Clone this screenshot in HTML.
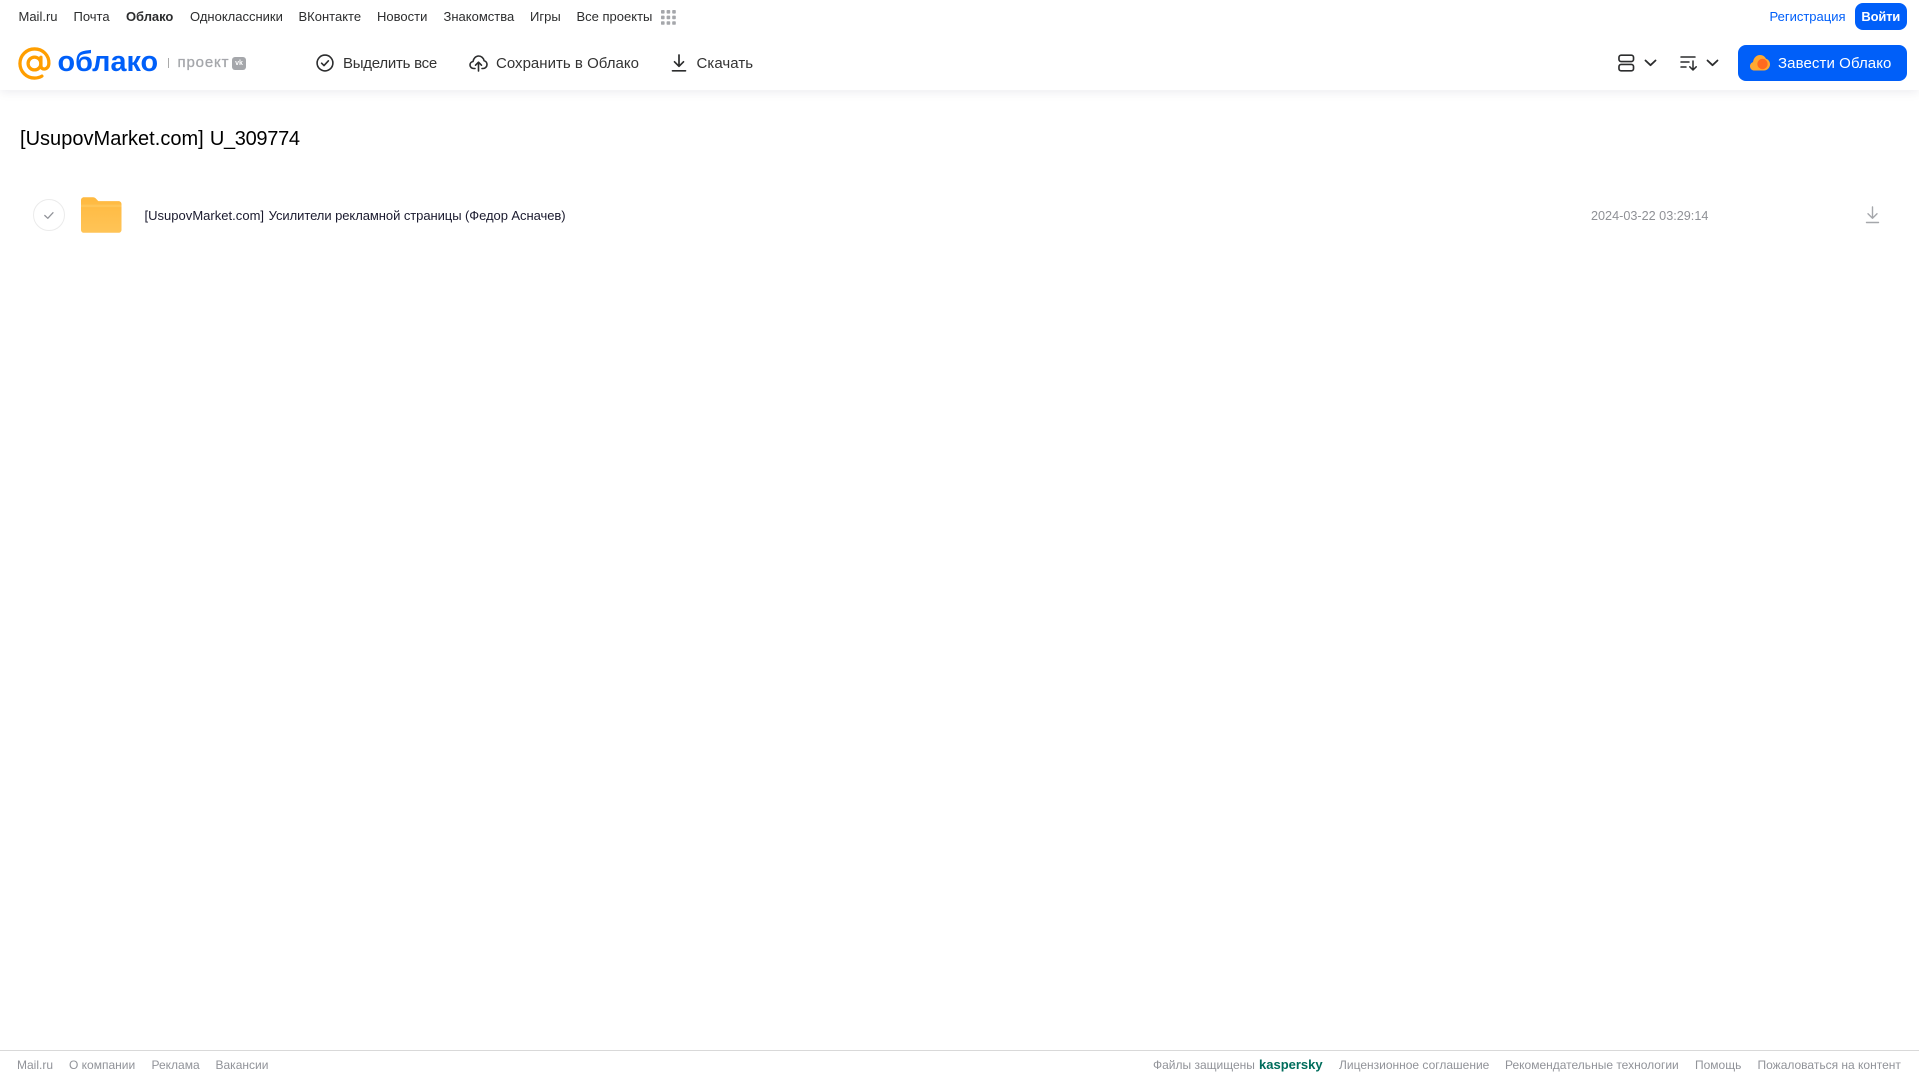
<!DOCTYPE html>
<html lang="ru">
<head>
<meta charset="utf-8">
<title>Облако</title>
<style>
html,body{margin:0;padding:0;background:#fff;width:1919px;height:1079px;overflow:hidden}
body{position:relative;font-family:"Liberation Sans","Noto Sans CJK SC",sans-serif;color:#2c2d2e}
.t{position:absolute;white-space:nowrap}
.n{font-size:13px;line-height:18px;top:8px;color:#2c2d2e}
.b{font-size:15px;line-height:20px;top:54px;color:#333}
.f{font-size:12px;line-height:16px;top:1057px;color:#919399}
svg{position:absolute;display:block}
#hd{position:absolute;left:0;top:0;width:1919px;height:90px;background:#fff;box-shadow:0 2px 10px rgba(0,16,61,.08)}
#ft{position:absolute;left:0;top:1050px;width:1919px;height:1px;background:#d9d9d9}
</style>
</head>
<body>
<div id="hd"></div>

<span class="t n" style="left:18.5px">Mail.ru</span>
<span class="t n" style="left:73.5px">Почта</span>
<span class="t n" style="left:126px;font-weight:bold;letter-spacing:-.05px">Облако</span>
<span class="t n" style="left:190px">Одноклассники</span>
<span class="t n" style="left:298.5px">ВКонтакте</span>
<span class="t n" style="left:377px">Новости</span>
<span class="t n" style="left:443.5px">Знакомства</span>
<span class="t n" style="left:530px">Игры</span>
<span class="t n" style="left:576.5px">Все проекты</span>
<svg style="left:661px;top:10px" width="15" height="15" viewBox="0 0 15 15" fill="#a5a7ab">
<rect x="0" y="0" width="3.6" height="3.6" rx=".8"/><rect x="5.6" y="0" width="3.6" height="3.6" rx=".8"/><rect x="11.2" y="0" width="3.6" height="3.6" rx=".8"/>
<rect x="0" y="5.6" width="3.6" height="3.6" rx=".8"/><rect x="5.6" y="5.6" width="3.6" height="3.6" rx=".8"/><rect x="11.2" y="5.6" width="3.6" height="3.6" rx=".8"/>
<rect x="0" y="11.2" width="3.6" height="3.6" rx=".8"/><rect x="5.6" y="11.2" width="3.6" height="3.6" rx=".8"/><rect x="11.2" y="11.2" width="3.6" height="3.6" rx=".8"/>
</svg>

<span class="t n" style="left:1769.5px;color:#005ff9">Регистрация</span>
<div class="t" style="left:1854.500px;top:3px;width:52.500px;height:27px;border-radius:8px;background:#005ff9;color:#fff;font-size:13px;font-weight:bold;letter-spacing:-.2px;line-height:27px;text-align:center">Войти</div>

<svg style="left:18px;top:47px" width="33" height="33" viewBox="0 0 34 34" fill="none" stroke="#ff9e00">
<circle cx="17" cy="17" r="6.6" stroke-width="3.4"/>
<path d="M23.6 10.6V19.5c0 4.6 7.900 4.600 8.200-2.500C32.200 8.500 25.500 2 17 2 8.700 2 2 8.700 2 17s6.700 15 15 15c3 0 5.400-.7 7.600-2" stroke-width="3.4" stroke-linecap="round"/>
</svg>
<span class="t" style="left:57.500px;top:43.500px;font-size:28.800px;line-height:36px;font-weight:bold;color:#005ff9">облако</span>
<div class="t" style="left:168px;top:58px;width:1px;height:10px;background:#aaa"></div>
<span class="t" style="left:177.500px;top:53px;font-size:15px;line-height:20px;color:#a5a7ab;letter-spacing:.85px;-webkit-text-stroke:.3px #a5a7ab">проект</span>
<div class="t" style="left:232px;top:57px;width:14px;height:13px;border-radius:3px;background:#a5a7ab;color:#fff;font-size:7px;font-weight:bold;line-height:13px;text-align:center">vk</div>

<svg style="left:316px;top:54px" width="18" height="18" viewBox="0 0 18 18" fill="none" stroke="#2c2d2e" stroke-width="1.6" stroke-linecap="round" stroke-linejoin="round">
<circle cx="9" cy="9" r="7.9"/><path d="M5.600 9.200l2.400 2.400 4.400-4.800"/>
</svg>
<span class="t b" style="left:343px;letter-spacing:-.25px">Выделить все</span>

<svg style="left:469px;top:54px" width="19" height="18" viewBox="0 0 19 18" fill="none" stroke="#2c2d2e" stroke-width="1.6" stroke-linecap="round" stroke-linejoin="round">
<path d="M6 14.500H4.800C2.600 14.500 1 13 1 11c0-1.800 1.300-3.200 3-3.500C4.500 4.300 6.800 2 9.600 2c2.700 0 5 2 5.500 4.700 1.700.4 2.900 2 2.900 3.800 0 2.200-1.700 4-3.900 4H13"/>
<path d="M9.500 17V8.500M6.500 11.200l3-3 3 3"/>
</svg>
<span class="t b" style="left:496px;letter-spacing:.02px">Сохранить в Облако</span>

<svg style="left:671px;top:54px" width="16" height="18" viewBox="0 0 16 18" fill="none" stroke="#2c2d2e" stroke-width="1.7" stroke-linecap="round" stroke-linejoin="round">
<path d="M8 1v11M3.500 7.800L8 12.300l4.500-4.500M1.500 16.800h13"/>
</svg>
<span class="t b" style="left:696.500px;letter-spacing:.05px">Скачать</span>

<svg style="left:1618px;top:54px" width="16.500" height="18" viewBox="0 0 17 18" fill="none" stroke="#2c2d2e" stroke-width="1.7">
<rect x="1" y="1" width="15" height="6.500" rx="2.200"/><rect x="1" y="10.500" width="15" height="6.500" rx="2.200"/>
</svg>
<svg style="left:1644px;top:59px" width="13" height="8" viewBox="0 0 13 8" fill="none" stroke="#2c2d2e" stroke-width="1.8" stroke-linecap="round" stroke-linejoin="round"><path d="M1.500 1.500l5 4.700 5-4.700"/></svg>
<svg style="left:1680px;top:55px" width="18" height="16" viewBox="0 0 18 16" fill="none" stroke="#2c2d2e" stroke-width="1.500" stroke-linecap="round" stroke-linejoin="round">
<path d="M1 2h14M1 7h8M1 12h5M13 6v9M9.800 11.800L13 15l3.200-3.200"/>
</svg>
<svg style="left:1706px;top:59px" width="13" height="8" viewBox="0 0 13 8" fill="none" stroke="#2c2d2e" stroke-width="1.8" stroke-linecap="round" stroke-linejoin="round"><path d="M1.500 1.500l5 4.700 5-4.700"/></svg>

<div class="t" style="left:1738px;top:45px;width:169px;height:36px;border-radius:8px;background:#005ff9"></div>
<svg style="left:1750px;top:54px" width="20" height="17" viewBox="0 0 20 17">
<path d="M4.500 16.500C2 16.500 0 14.700 0 12.200 0 10.300 1.200 8.700 3 8.100 3.500 4 6.500 1 10 1c2.800 0 5 1.500 6 3.800 2.300.7 4 2.900 4 5.500 0 3.400-2.700 6.200-6 6.200z" fill="#ffa930"/>
<circle cx="12.500" cy="10" r="5.200" fill="#ff6a1f"/>
</svg>
<span class="t b" style="left:1778px;color:#fff;letter-spacing:.09px">Завести Облако</span>

<h1 class="t" style="margin:0;left:20px;top:126px;font-size:20px;line-height:26px;font-weight:normal;color:#000"><span style="letter-spacing:.02px">[UsupovMarket.com]</span> <span style="letter-spacing:-.3px;margin-left:.5px">U_309774</span></h1>

<svg style="left:32px;top:198px" width="34" height="34" viewBox="0 0 34 34" fill="none">
<circle cx="17" cy="17" r="15.500" stroke="#ebebeb" stroke-width="1"/>
<path d="M12.800 17.500l3 2.800 5.200-5.600" stroke="#919399" stroke-width="1.300" stroke-linecap="round" stroke-linejoin="round"/>
</svg>
<svg style="left:81px;top:197px" width="40.500" height="36" viewBox="0 0 41 36">
<defs><linearGradient id="g" x1="0" y1="0" x2="0" y2="1"><stop offset="0" stop-color="#ffb93f"/><stop offset="1" stop-color="#ffc457"/></linearGradient></defs>
<path d="M0 3C0 1.300 1.300 0 3 0h9c1.600 0 2.600.7 3.500 1.800L17.500 4H38c1.700 0 3 1.300 3 3v26c0 1.700-1.300 3-3 3H3c-1.700 0-3-1.300-3-3z" fill="url(#g)"/>
<path d="M0 7.500h41V10H0z" fill="#ffcc66" opacity=".55"/>
</svg>

<span class="t" style="left:144.500px;top:207px;font-size:13px;line-height:17px;color:#1a1a2e;letter-spacing:-.06px"><span style="letter-spacing:.02px">[UsupovMarket.com]</span> <span style="margin-left:1px">Усилители рекламной страницы (Федор Асначев)</span></span>
<span class="t" style="left:1591px;top:208px;font-size:12.650px;line-height:17px;color:#8f9196">2024-03-22 03:29:14</span>
<svg style="left:1865px;top:206px" width="15" height="18" viewBox="0 0 15 18" fill="none" stroke="#a5a7ab" stroke-width="1.400" stroke-linecap="round" stroke-linejoin="round">
<path d="M7.500 1v11M3 7.800l4.500 4.500L12 7.800M1.500 16.500h12"/>
</svg>

<div id="ft"></div>
<span class="t f" style="left:17px">Mail.ru</span>
<span class="t f" style="left:69px">О компании</span>
<span class="t f" style="left:151.500px">Реклама</span>
<span class="t f" style="left:215.500px">Вакансии</span>
<span class="t f" style="left:1153px">Файлы защищены</span>
<span class="t f" style="left:1259px;font-size:13px;font-weight:bold;color:#006d5c">kaspersky</span>
<span class="t f" style="left:1339px">Лицензионное соглашение</span>
<span class="t f" style="left:1505px">Рекомендательные технологии</span>
<span class="t f" style="left:1695px">Помощь</span>
<span class="t f" style="left:1757.500px">Пожаловаться на контент</span>
</body>
</html>
